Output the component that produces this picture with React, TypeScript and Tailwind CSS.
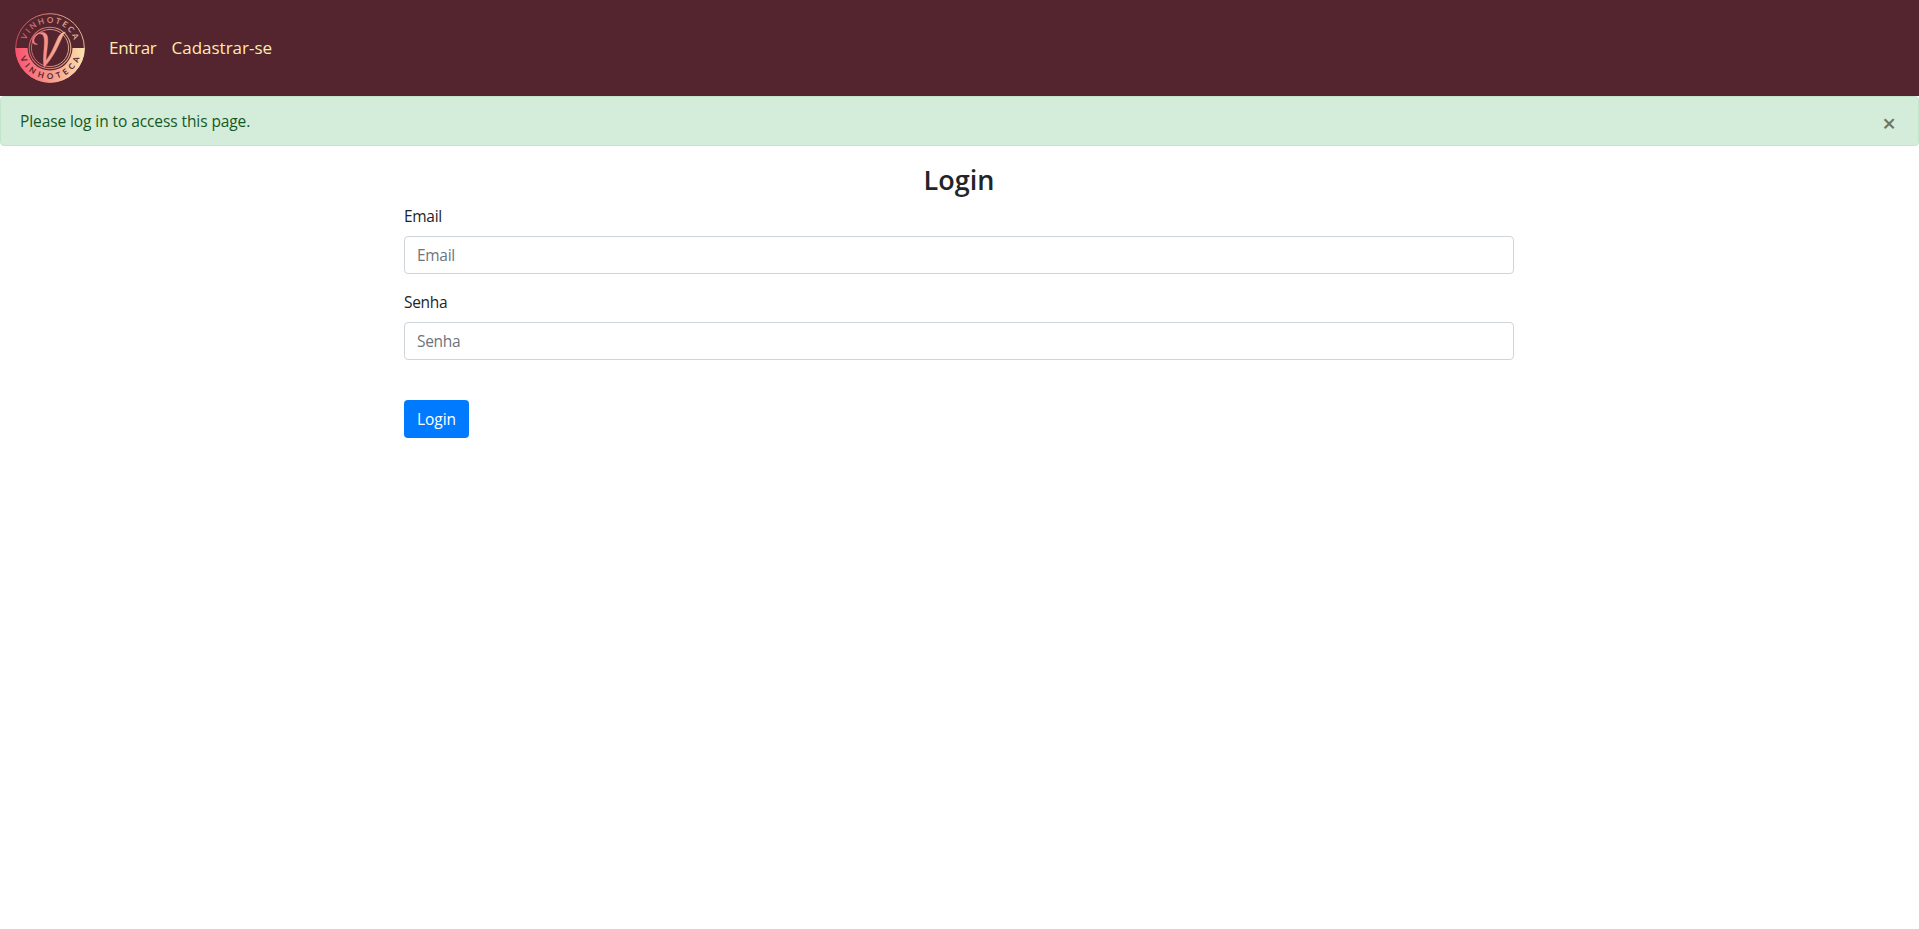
import React from "react";

function Logo() {
  return (
    <svg width="80" height="80" viewBox="0 0 80 80" className="block" aria-label="Vinhoteca">
      <defs>
        <linearGradient id="wine" gradientUnits="userSpaceOnUse" x1="5" y1="40" x2="75" y2="40">
          <stop offset="0" stopColor="#f9506f" />
          <stop offset="0.5" stopColor="#f7998b" />
          <stop offset="1" stopColor="#fbe3b0" />
        </linearGradient>
        <linearGradient id="rim" gradientUnits="userSpaceOnUse" x1="5" y1="40" x2="75" y2="40">
          <stop offset="0" stopColor="#c8485f" />
          <stop offset="0.5" stopColor="#d8887d" />
          <stop offset="1" stopColor="#dcbc98" />
        </linearGradient>
        <path id="arcTop" d="M14.8 40a25.2 25.2 0 0 1 50.4 0" />
        <path id="arcBottom" d="M8.9 40a31.1 31.1 0 0 0 62.2 0" />
      </defs>
      <circle cx="40" cy="40" r="34.3" fill="none" stroke="url(#rim)" strokeWidth="1" />
      <path d="M5.3 40a34.7 34.7 0 0 0 69.4 0h-12.2a22.5 22.5 0 0 1-45 0z" fill="url(#wine)" />
      <circle cx="40" cy="40" r="20.8" fill="none" stroke="url(#rim)" strokeWidth="1.1" />
      <circle cx="40" cy="40" r="18.6" fill="none" stroke="url(#rim)" strokeWidth="1" />
      <text fontFamily="Lato, sans-serif" fontSize="8" fontWeight="700" fill="url(#rim)" textAnchor="middle" letterSpacing="2">
        <textPath href="#arcTop" startOffset="51%">VINHOTECA</textPath>
      </text>
      <text fontFamily="Lato, sans-serif" fontSize="8" fontWeight="700" fill="#54252e" textAnchor="middle" letterSpacing="3.9">
        <textPath href="#arcBottom" startOffset="52%">VINHOTECA</textPath>
      </text>
      <path
        d="M27.5 36.2C23 37.5 21 33 23.2 29.2C26 24.4 33.5 22.2 36.6 26.4C39.5 30.4 36.3 43 36 52.6C41.5 45.5 44.8 36.5 47.6 30.4C49.2 26.8 51.8 24.3 55.4 24C53 26.4 52.3 28.8 50.6 32.6C46.8 41.2 42.2 50.5 34.2 59C31.8 50 36.4 32.8 33.2 27.6C30.8 24 25.8 26.4 24.4 29.8C23.2 33 24.3 35.6 27.5 36.2Z"
        fill="url(#wine)"
        stroke="url(#wine)"
        strokeWidth="0.4"
      />
    </svg>
  );
}

function Field({ label, type }: { label: string; type: string }) {
  return (
    <div className="mb-4">
      <label htmlFor={type} className="mb-2 block h-6 tracking-[-0.3px]">{label}</label>
      <input
        id={type}
        type={type}
        placeholder={label}
        className="block h-[38px] w-full rounded border border-[#ced4da] bg-white px-3 tracking-[-0.3px] text-[#495057] placeholder:text-[#6c757d]"
      />
    </div>
  );
}

export default function App() {
  return (
    <div className="min-h-screen bg-white font-['Open_Sans',sans-serif] text-[15.5px] leading-6 text-[#212529]">
      <nav className="flex h-24 items-center bg-[#54252e] px-2.5">
        <a href="#" className="mr-[11px]"><Logo /></a>
        <div className="flex text-[17px] text-[#ffebb0]">
          <a href="#" className="pl-2 pr-[7px] tracking-[-0.3px]">Entrar</a>
          <a href="#" className="px-2">Cadastrar-se</a>
        </div>
      </nav>
      <div className="mb-4 flex h-[50px] items-center justify-between rounded border border-[#c3e6cb] bg-[#d4edda] pl-[19px] text-[#155724]">
        <span className="tracking-[-0.09px]">Please log in to access this page.</span>
        <button className="mr-[22px] pt-[3px] text-2xl font-semibold text-black opacity-50">×</button>
      </div>
      <main className="mx-auto w-[1141px] pl-[15px] pr-4">
        <h3 className="mb-2 pt-px text-center text-[27px] font-semibold leading-[33px]">Login</h3>
        <form>
          <Field label="Email" type="email" />
          <Field label="Senha" type="password" />
          <button type="button" className="mt-10 block h-[38px] w-[65px] rounded bg-[#007bff] text-white">Login</button>
        </form>
      </main>
    </div>
  );
}
